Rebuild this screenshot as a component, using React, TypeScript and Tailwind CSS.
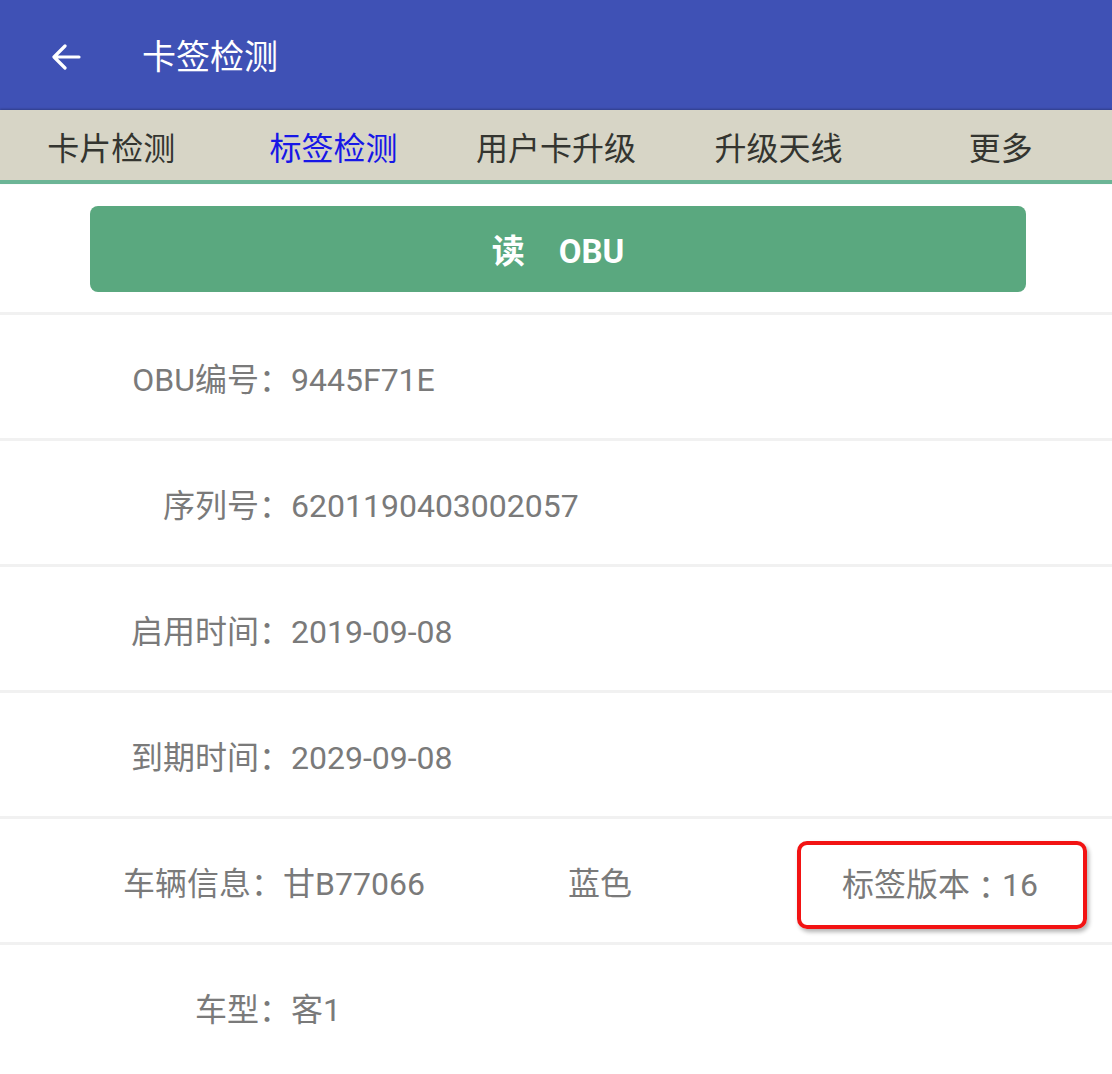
import React from "react";

const font = { fontFamily: "Roboto, 'Noto Sans CJK SC', sans-serif" };

function Row({ label, value, labelW = "w-[291px]", children }: { label: string; value: string; labelW?: string; children?: React.ReactNode }) {
  return (
    <div className="border-t-[3px] border-[#f1f1f1] h-[126px] flex items-center pt-[7px] text-[32px] text-[#7a7a7a]">
      <div className={labelW + " text-right shrink-0 whitespace-nowrap"}>{label}</div>
      {children ? children : <div className="whitespace-nowrap">{value}</div>}
    </div>
  );
}

export default function App() {
  const tabs = ["卡片检测", "标签检测", "用户卡升级", "升级天线", "更多"];
  return (
    <div className="w-[1112px] h-[1074px] overflow-hidden bg-white" style={font}>
      <div className="h-[110px] bg-[#3f51b5] flex items-center">
        <svg width="30" height="26" viewBox="0 0 30 26" className="ml-[51px] mt-[4px]">
          <path d="M28 13H4M14 2L3 13l11 11" fill="none" stroke="white" strokeWidth="3.2" strokeLinecap="round" strokeLinejoin="round" />
        </svg>
        <div className="ml-[61px] text-white text-[34px] leading-none pt-[4px]">卡签检测</div>
      </div>
      <div className="h-[74px] bg-[#d7d5c6] border-b-[4px] border-[#6cb596] grid grid-cols-5 items-center shadow-[0_-1px_2px_rgba(0,0,0,0.25)]">
        {tabs.map((t, i) => (
          <div
            key={t}
            className={
              "text-center text-[32px] leading-none pt-[7px] " + (i === 1 ? "text-[#1717e6]" : "text-[#343530]")
            }
          >
            {t}
          </div>
        ))}
      </div>
      <div className="pt-[22px] pb-[20px]">
        <div className="ml-[90px] w-[936px] h-[86px] rounded-[8px] bg-[#5aa87f] flex items-center justify-center pt-[5px] text-white text-[33px] font-bold">
          <span>读</span>
          <span className="ml-[34px]">OBU</span>
        </div>
      </div>
      <Row label="OBU编号：" value="9445F71E" />
      <Row label="序列号：" value="6201190403002057" />
      <Row label="启用时间：" value="2019-09-08" />
      <Row label="到期时间：" value="2029-09-08" />
      <Row label="车辆信息：" value="" labelW="w-[283px]">
        <div className="w-[285px] shrink-0 whitespace-nowrap">甘B77066</div>
        <div className="w-[229px] shrink-0 whitespace-nowrap">蓝色</div>
        <div className="w-[290px] h-[88px] mt-[2px] shrink-0 rounded-[10px] border-[4px] border-[#f21313] shadow-[2px_3px_4px_rgba(0,0,0,0.3)] flex items-center pl-[41px] whitespace-nowrap">
          <span>标签版本</span>
          <span style={{ fontFamily: "'Noto Sans CJK TC', sans-serif" }}>：</span>
          <span>16</span>
        </div>
      </Row>
      <Row label="车型：" value="客1" />
    </div>
  );
}
